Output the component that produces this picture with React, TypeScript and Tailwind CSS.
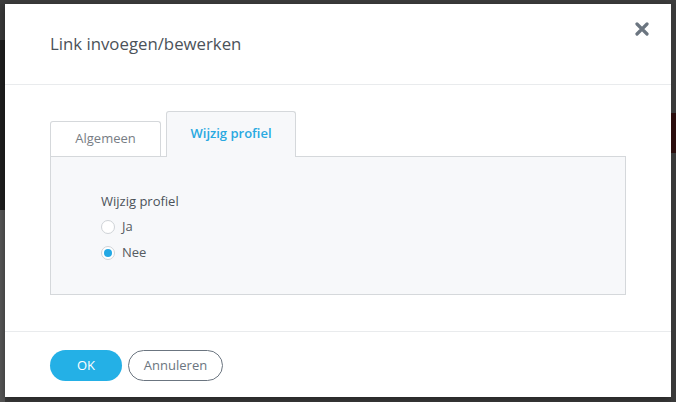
import React from 'react';

const font = { fontFamily: '"Open Sans", "Noto Sans", sans-serif' };

const Radio: React.FC<{ label: string; checked?: boolean }> = ({ label, checked }) => (
  <label className="flex items-center gap-[7px] h-[26px] text-[13px] text-[#555b61]">
    <span className="w-[14px] h-[14px] rounded-full border border-[#cfd3d7] bg-white flex items-center justify-center">
      {checked && <span className="w-[8px] h-[8px] rounded-full bg-[#23a8e4]" />}
    </span>
    {label}
  </label>
);

export default function App() {
  return (
    <div className="w-[676px] h-[402px] bg-[#3a3a3a] overflow-hidden flex flex-col" style={font}>
      {/* top strip of the page behind */}
      <div className="h-[4px] bg-[#3d3d3d]" />
      <div className="flex flex-1">
        <div className="w-[5px] flex flex-col">
          <div className="h-[36px] bg-[#3a3a3a]" />
          <div className="h-[170px] bg-[#1f1f1f]" />
          <div className="flex-1 bg-[#565656]" />
        </div>

        {/* Modal */}
        <div className="w-[666px] h-[393px] bg-white flex flex-col shadow-[0_2px_8px_rgba(0,0,0,0.4)]">
          {/* Header */}
          <div className="h-[81px] flex justify-between pl-[45px] pr-[22px] border-b border-[#e9ebed]">
            <h2 className="self-center text-[16.8px] text-[#4b5259] font-normal pb-[1px]">Link invoegen/bewerken</h2>
            <button className="self-start mt-[18px] w-[14px] h-[14px] flex items-center justify-center">
              <svg width="14" height="14" viewBox="0 0 14 14">
                <path d="M2 2 L12 12 M12 2 L2 12" stroke="#6b7580" strokeWidth="3.2" strokeLinecap="round" />
              </svg>
            </button>
          </div>

          {/* Body */}
          <div className="flex-1 px-[45px] pt-[26px]">
            <div className="flex items-end gap-[5px]">
              <div className="w-[111px] h-[35px] border border-b-0 border-[#d5d8db] rounded-t-[3px] bg-white flex items-center justify-center text-[13px] text-[#777d84]">
                Algemeen
              </div>
              <div className="relative z-10 -mb-px w-[130px] h-[46px] border border-b-0 border-[#d5d8db] rounded-t-[3px] bg-[#f7f8fa] flex items-center justify-center text-[13px] font-semibold text-[#29a9e1] pb-[1px]">
                Wijzig profiel
              </div>
            </div>
            <div className="h-[139px] border border-[#d5d8db] bg-[#f7f8fa] pl-[50px] pt-[35px]">
              <div className="text-[13px] text-[#4b5259] h-[18px] leading-[18px] mb-[4px]">Wijzig profiel</div>
              <Radio label="Ja" />
              <Radio label="Nee" checked />
            </div>
          </div>

          {/* Footer */}
          <div className="border-t border-[#e9ebed] pl-[45px] pt-[18px] pb-[16px] flex gap-[6px]">
            <button className="w-[72px] h-[31px] rounded-full bg-[#24b0e6] text-white text-[13px]">OK</button>
            <button className="w-[95px] h-[31px] rounded-full border border-[#6b7580] text-[#6b7580] text-[13px]">Annuleren</button>
          </div>
        </div>

        <div className="flex-1 flex flex-col">
          <div className="h-[109px] bg-[#3a3a3a]" />
          <div className="h-[40px] bg-[#2a0d0d]" />
          <div className="flex-1 bg-[#393939]" />
        </div>
      </div>
    </div>
  );
}
